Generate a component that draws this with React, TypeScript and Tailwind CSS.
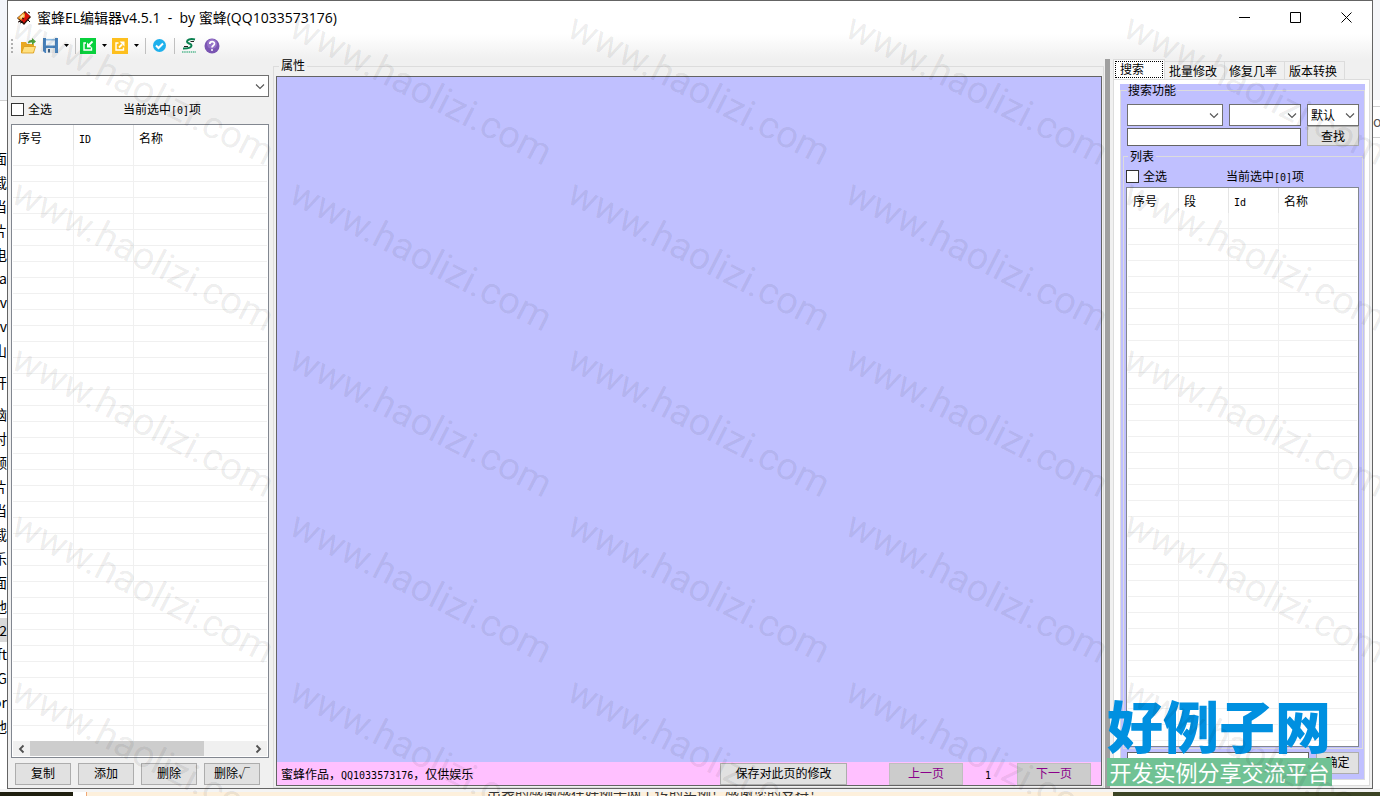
import React from 'react';

interface Column {
  label: string;
  width: string;
  mono?: boolean;
}

const leftColumns: Column[] = [
  { label: '序号', width: 'w-[61px]' },
  { label: 'ID', width: 'w-[60px]', mono: true },
  { label: '名称', width: 'w-auto' },
];

const rightColumns: Column[] = [
  { label: '序号', width: 'w-[51px]' },
  { label: '段', width: 'w-[50px]' },
  { label: 'Id', width: 'w-[50px]', mono: true },
  { label: '名称', width: 'w-auto' },
];

const emptyRows = Array.from({ length: 80 }, (_, i) => i);
const watermarks = Array.from({ length: 25 }, (_, i) => i);

// Lines of the window behind, cut off at our left edge
const behindGroups = [
  ['面', '载', '当', '片', '电', 'ta', 'v', 'v', '山'],
  ['S开'],
  ['脑', '对', '频', '片', '当', '载', '乐', '面', '他', '2', 'ft', 'G', 'or', '他'],
];

const Mono: React.FC<{ children: React.ReactNode }> = ({ children }) => (
  <span className="font-['DejaVu_Sans_Mono',monospace] text-[10px] leading-none">{children}</span>
);

const Chevron: React.FC = () => (
  <svg className="pointer-events-none absolute right-1 top-2 h-2 w-2.5" viewBox="0 0 10 8" fill="none" stroke="#555" strokeWidth="1.1">
    <path d="M1 1.5 5 5.5 9 1.5" />
  </svg>
);

const Combo: React.FC<{ label: string; className: string; value?: string }> = ({ label, className, value = '' }) => (
  <div className={`relative h-[22px] ${className}`}>
    <select
      aria-label={label}
      defaultValue={value}
      className="block h-full w-full appearance-none border border-[#707070] bg-white pl-[3px] text-xs leading-5 outline-none"
    >
      <option value={value}>{value}</option>
    </select>
    <Chevron />
  </div>
);

const Button: React.FC<{ className: string; disabled?: boolean; children: React.ReactNode }> = ({ className, disabled, children }) => (
  <button
    type="button"
    disabled={disabled}
    className={`shrink-0 border pb-0.5 text-xs leading-[18px] ${
      disabled ? 'border-[#bfbfbf] bg-[#cccccc] text-[#8b008b]' : 'border-[#adadad] bg-[#e1e1e1] text-black'
    } ${className}`}
  >
    {children}
  </button>
);

const ListTable: React.FC<{ columns: Column[] }> = ({ columns }) => (
  <div className="min-h-0 flex-1 overflow-hidden">
    <table className="w-full table-fixed border-separate border-spacing-0">
      <thead>
        <tr>
          {columns.map((col, i) => (
            <th
              key={i}
              className={`h-[25px] border-r border-[#e5e5e5] p-0 pl-[5px] text-left align-middle font-normal last:border-r-0 ${col.width}`}
            >
              {col.mono ? <Mono>{col.label}</Mono> : col.label}
            </th>
          ))}
        </tr>
      </thead>
      <tbody>
        {emptyRows.map((row) => (
          <tr key={row}>
            {columns.map((_, i) => (
              <td key={i} className="h-4 border-b border-r border-[#f0f0f0] p-0 last:border-r-0"></td>
            ))}
          </tr>
        ))}
      </tbody>
    </table>
  </div>
);

const SelectAll: React.FC<{ id: string; gap: string }> = ({ id, gap }) => (
  <div className={`flex h-[18px] items-center leading-[18px] ${gap}`}>
    <div className="flex items-center gap-1">
      <input id={id} type="checkbox" className="h-[13px] w-[13px] appearance-none border border-[#333] bg-white" />
      <label htmlFor={id}>全选</label>
    </div>
    <span>
      当前选中<Mono>[0]</Mono>项
    </span>
  </div>
);

const DropArrow: React.FC = () => (
  <svg className="h-[3px] w-[5px]" viewBox="0 0 5 3"><path d="M0 0h5L2.5 3z" fill="#000" /></svg>
);

const TitleBar: React.FC = () => (
  <header className="flex h-[33px] shrink-0 items-center bg-white pl-2 font-['Open_Sans','Noto_Sans_CJK_SC',sans-serif]">
    <svg className="h-4 w-4" viewBox="0 0 16 16">
      <path d="M1 8 9 1l6 6-7 8z" fill="#2b1208" />
      <path d="M1.5 8 8 2l2 5-4 4z" fill="#f7a02c" />
      <path d="M4 7l3-3 1 2-3 3z" fill="#ffe0a0" />
      <path d="M9 2l5 4-6 7-3-3 4-3z" fill="#d81208" />
      <path d="M2 12l3-1M12 10l2 2M4 13l3-1M12 2l2 1M6 8l2 1" stroke="#160704" />
    </svg>
    <h1 className="ml-[5px] flex-1 whitespace-pre text-sm">蜜蜂EL编辑器v4.5.1  -  by 蜜蜂(QQ1033573176)</h1>
    <button type="button" aria-label="最小化" className="flex h-full w-[51px] items-center justify-center">
      <svg className="h-[11px] w-[11px]" viewBox="0 0 11 11"><path d="M0 5.5h11" stroke="#000" /></svg>
    </button>
    <button type="button" aria-label="最大化" className="flex h-full w-[51px] items-center justify-center">
      <svg className="h-[11px] w-[11px]" viewBox="0 0 11 11"><path d="M.5.5h10v10H.5z" fill="none" stroke="#000" /></svg>
    </button>
    <button type="button" aria-label="关闭" className="flex h-full w-[51px] items-center justify-center">
      <svg className="h-[11px] w-[11px]" viewBox="0 0 11 11"><path d="M.5.5l10 10M10.5.5l-10 10" stroke="#000" /></svg>
    </button>
  </header>
);

const Toolbar: React.FC = () => (
  <div className="flex h-[25px] shrink-0 items-center bg-linear-to-b from-white to-[#f0f0f0] pb-0.5 pl-[3px]">
    <svg className="mr-[7px] h-4 w-0.5" viewBox="0 0 2 16"><path d="M1 1v15" stroke="#b0b0b0" strokeWidth="2" strokeDasharray="2 2" /></svg>
    <button type="button" aria-label="打开">
      <svg className="h-4 w-[17px]" viewBox="0 0 17 16">
        <path d="M1 4h5l1 2h7v9H1z" fill="#e9a820" />
        <path d="M1.500 15 4 8.500h11.500l-2 6.500z" fill="#ffe080" stroke="#d89a18" strokeWidth=".8" />
        <path d="M8 5.500C8 2.500 10 2 12 2V0l4 3.500L12 7V4.500c-2 0-3 0-4 1z" fill="#4fa03c" />
      </svg>
    </button>
    <button type="button" aria-label="保存" className="ml-1.5 flex items-center gap-1.5">
      <svg className="h-[15px] w-[15px]" viewBox="0 0 15 15">
        <path d="M0 0h15v15H2l-2-2z" fill="#4a84bd" />
        <path d="M3 0h9v7.500H3z" fill="#eef4fa" />
        <path d="M3 1h9v1.500H3z" fill="#8dbbe2" />
        <path d="M3 10h9v5H3z" fill="#e3e7ea" />
        <path d="M5 11h2v3.500H5z" fill="#3e5f80" />
      </svg>
      <DropArrow />
    </button>
    <span className="ml-1.5 h-4 w-px bg-[#c0c0c0]"></span>
    <button type="button" aria-label="导入" className="ml-1 flex items-center gap-1.5">
      <svg className="h-4 w-4" viewBox="0 0 16 16">
        <path d="M0 0h16v16H0z" fill="#08d03c" />
        <path d="M6 5H4v7h7.500V9.500" fill="none" stroke="#fff" strokeWidth="1.400" />
        <path d="M12.500 3.500 9 7" fill="none" stroke="#fff" strokeWidth="1.800" />
        <path d="M7 4.500V9.500h5z" fill="#fff" />
      </svg>
      <DropArrow />
    </button>
    <button type="button" aria-label="导出" className="ml-[5px] flex items-center gap-1.5">
      <svg className="h-4 w-4" viewBox="0 0 16 16">
        <path d="M0 0h16v16H0z" fill="#fdbf1e" />
        <path d="M6.500 5H4v7h7.500V9.500" fill="none" stroke="#fff" strokeWidth="1.400" />
        <path d="M7 9.500 10 6.500" fill="none" stroke="#fff" strokeWidth="1.800" />
        <path d="M7.500 3.500h5v5z" fill="#fff" />
      </svg>
      <DropArrow />
    </button>
    <span className="ml-1.5 h-4 w-px bg-[#c0c0c0]"></span>
    <button type="button" aria-label="检查" className="ml-[7px]">
      <svg className="h-[13px] w-[13px]" viewBox="0 0 13 13">
        <circle cx="6.500" cy="6.500" r="6.500" fill="#1eb0ec" />
        <path d="M3 6.500l2.500 2.500L10 4.500" fill="none" stroke="#fff" strokeWidth="2" />
      </svg>
    </button>
    <span className="ml-2 h-4 w-px bg-[#c0c0c0]"></span>
    <button type="button" aria-label="切换" className="ml-1.5">
      <svg className="h-4 w-4" viewBox="0 0 16 16">
        <path d="M14 1.500C9 .3 6 1.800 6 3.800s4.500 1.500 4.500 3.700S7 10.500 2 10.500" fill="none" stroke="#0a8050" strokeWidth="2" />
        <path d="M13 3.500H9.500M3 8.500h4" stroke="#222" strokeWidth="1.200" />
        <path d="M1 14h14" stroke="#55b890" strokeWidth="1.500" strokeDasharray="1.500 .7" />
      </svg>
    </button>
    <button type="button" aria-label="帮助" className="ml-[7px]">
      <svg className="h-4 w-4" viewBox="0 0 16 16">
        <circle cx="8" cy="8" r="7.500" fill="#7a55b2" />
        <circle cx="8" cy="6" r="5" fill="#9673c8" />
        <path d="M5.800 6c0-3.200 4.700-3 4.700-.3C10.500 7.500 8 7.500 8 9.500" fill="none" stroke="#fff" strokeWidth="1.700" />
        <circle cx="8" cy="12" r="1" fill="#fff" />
      </svg>
    </button>
  </div>
);

const ItemPanel: React.FC = () => (
  <section className="flex w-[261px] shrink-0 flex-col pb-[3px] pl-[3px] pt-4">
    <Combo label="列表" className="w-full" />
    <div className="mb-1.5 mt-[3px]"><SelectAll id="all-left" gap="gap-[71px]" /></div>
    <div className="flex min-h-0 flex-1 flex-col border border-[#828790] bg-white px-px">
      <ListTable columns={leftColumns} />
      <div className="mb-px flex h-[15px] shrink-0 items-center bg-[#f0f0f0]">
        <svg className="h-2.5 w-[17px]" viewBox="0 0 17 10" fill="none" stroke="#505050" strokeWidth="1.800"><path d="M10.500 1.500 7 5l3.500 3.500" /></svg>
        <div className="flex h-full flex-1"><div className="h-full w-[79%] bg-[#cdcdcd]"></div></div>
        <svg className="h-2.5 w-[17px]" viewBox="0 0 17 10" fill="none" stroke="#505050" strokeWidth="1.800"><path d="M6.500 1.500 10 5 6.500 8.500" /></svg>
      </div>
    </div>
    <div className="mt-[5px] flex gap-[7px] pl-1">
      <Button className="h-[22px] w-14">复制</Button>
      <Button className="h-[22px] w-14">添加</Button>
      <Button className="h-[22px] w-14">删除</Button>
      <Button className="h-[22px] w-14">删除√</Button>
    </div>
  </section>
);

const PropertyPanel: React.FC = () => (
  <fieldset className="ml-1 mr-px flex min-w-0 flex-1 flex-col border border-[#dcdcdc] pb-px pl-0.5 pr-px">
    <legend className="ml-[3px] h-[14px] px-0.5 leading-3">属性</legend>
    <div className="mt-[3px] flex min-h-0 flex-1 flex-col border border-[#646464] bg-[#c0c0ff]">
      <div className="flex-1"></div>
      <div className="flex h-[23px] shrink-0 items-center bg-[#ffc0ff] pl-1 pr-2.5">
        <p className="flex-1">
          {'蜜蜂作品\uff0c'}
          <Mono>QQ1033573176</Mono>
          {'\uff0c仅供娱乐'}
        </p>
        <Button className="h-[22px] w-[127px]">保存对此页的修改</Button>
        <Button disabled className="ml-[42px] h-[22px] w-[74px]">上一页</Button>
        <span className="w-[54px] pr-1 text-center"><Mono>1</Mono></span>
        <Button disabled className="h-[22px] w-[74px]">下一页</Button>
      </div>
    </div>
  </fieldset>
);

const SearchPanel: React.FC = () => (
  <section className="flex w-[262px] shrink-0 flex-col pb-0.5 pl-[3px] pr-0.5">
    <nav className="flex h-5 shrink-0 items-end" role="tablist">
      <button type="button" role="tab" aria-selected="true" className="h-5 w-[52px] border border-b-0 border-[#dcdcdc] bg-white p-px">
        <span className="block h-[17px] border border-dotted border-black pl-1 text-left leading-[14px]">搜索</span>
      </button>
      {['批量修改', '修复几率', '版本转换'].map((tab) => (
        <button key={tab} type="button" role="tab" aria-selected="false" className="h-[18px] border border-b-0 border-l-0 border-[#dcdcdc] pl-1 pr-[7px] leading-4">
          {tab}
        </button>
      ))}
    </nav>
    <div className="flex min-h-0 flex-1 flex-col border border-[#dcdcdc] bg-white pb-[5px] pl-1.5 pr-1 pt-1">
      <div className="flex min-h-0 flex-1 flex-col bg-[#c0c0ff]">
        <fieldset className="flex min-h-0 flex-1 flex-col border border-[#dcdcdc] pb-[5px] pl-0.5 pr-px">
          <legend className="ml-1 h-3 px-px leading-3">搜索功能</legend>
          <div className="mt-2 flex gap-1.5 px-1">
            <Combo label="字段" className="w-24" />
            <Combo label="条件" className="w-[72px]" />
            <Combo label="方式" className="flex-1" value="默认" />
          </div>
          <div className="flex gap-1.5 px-1">
            <input aria-label="关键字" className="mt-0.5 h-[18px] min-w-0 flex-1 border border-[#646464] bg-white px-1 outline-none" />
            <Button className="h-5 w-[52px]">查找</Button>
          </div>
          <fieldset className="mt-1 flex min-h-0 flex-1 flex-col border border-[#dcdcdc] pb-px pl-0.5 pr-[3px]">
            <legend className="ml-0.5 h-3 px-0.5 leading-3">列表</legend>
            <div className="mb-0.5 mt-[5px]"><SelectAll id="all-right" gap="gap-[59px]" /></div>
            <div className="flex min-h-0 flex-1 flex-col border border-[#828790] bg-white px-px">
              <ListTable columns={rightColumns} />
            </div>
          </fieldset>
          <div className="mt-[3px] flex justify-between px-1">
            <input aria-label="数值" className="h-[21px] w-[182px] border border-[#646464] bg-white px-1 outline-none" />
            <Button className="h-[22px] w-[43px]">确定</Button>
          </div>
        </fieldset>
      </div>
    </div>
  </section>
);

const App: React.FC = () => {
  return (
    <div className="relative flex h-screen w-full flex-col overflow-hidden bg-white font-['Noto_Sans_CJK_SC',sans-serif] text-xs text-black">
      <div className="flex min-h-0 flex-1">
        {/* Sliver of the window behind, left */}
        <aside className="flex w-[7px] shrink-0 flex-col overflow-hidden whitespace-nowrap bg-white text-sm leading-6">
          <div className="h-[100px] shrink-0 bg-[#f3f5fa]"></div>
          <div className="h-[46px] shrink-0 border-t border-[#d0d0d0]"></div>
          <div className="flex flex-col gap-2">
            {behindGroups.map((group, i) => (
              <div key={i}>
                {group.map((line, j) => (
                  <p key={j} className={`flex h-6 justify-end ${line === '2' ? 'bg-[#d9d9d9]' : ''}`}>{line}</p>
                ))}
              </div>
            ))}
          </div>
        </aside>

        <main className="flex min-w-0 flex-1 flex-col border border-[#646464] bg-[#f0f0f0]">
          <TitleBar />
          <Toolbar />
          <div className="flex min-h-0 flex-1">
            <ItemPanel />
            <PropertyPanel />
            <div className="w-[5px] shrink-0 bg-[#a0a0a0]"></div>
            <SearchPanel />
          </div>
        </main>

        {/* Sliver of the window behind, right */}
        <aside className="flex w-[7px] shrink-0 flex-col overflow-hidden bg-white">
          <div className="h-[100px] bg-[#f5f6f9]"></div>
          <div className="mt-1.5 h-8 border-y border-[#d0d0d0] text-sm leading-7 text-[#555]">o</div>
        </aside>
      </div>

      <footer className="flex h-[7px] shrink-0 border-t-[3px] border-[#f4f4f4] bg-white">
        <div className="w-[73px] bg-[#20200f]"></div>
        <div className="ml-[13px] flex-1 overflow-hidden border-l border-[#f0a878] bg-[#fdf0dc] pl-[400px]">
          <p className="-mt-2 whitespace-nowrap text-sm leading-4 text-[#333]">{'出表的感谢感在好例子网上传的实例\uff01感谢您的支持\uff01'}</p>
        </div>
        <div className="w-[267px] bg-[#3c4424]"></div>
      </footer>

      {/* Site logo */}
      <div className="absolute bottom-2.5 right-12 w-[225px] whitespace-nowrap">
        <p className="pb-1.5 text-[56px] font-black leading-[56px] text-[#0090e0]">好例子网</p>
        <p className="h-7 bg-[#70c294] text-center text-[22px] leading-[26px] text-white">开发实例分享交流平台</p>
      </div>

      {/* Watermark */}
      <div className="pointer-events-none absolute inset-0 grid auto-rows-[166px] grid-cols-[repeat(5,278px)] overflow-hidden pl-6 pt-1.5" aria-hidden="true">
        {watermarks.map((i) => (
          <span key={i} className="origin-top-left rotate-[27deg] whitespace-nowrap font-['Roboto',sans-serif] text-[38px] leading-10 text-black/8">
            www.haolizi.com
          </span>
        ))}
      </div>
    </div>
  );
};

export default App;
